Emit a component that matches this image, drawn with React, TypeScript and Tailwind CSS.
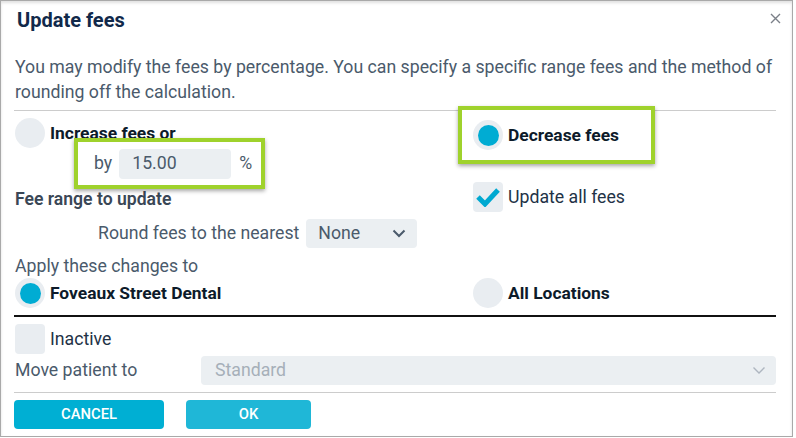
import React from "react";

function Radio({ checked }: { checked?: boolean }) {
  return (
    <span className="flex h-[30px] w-[30px] shrink-0 items-center justify-center rounded-full bg-[#e9edf1]">
      {checked && <span className="h-[21px] w-[21px] rounded-full bg-[#00acd3]" />}
    </span>
  );
}

function Checkbox({ checked }: { checked?: boolean }) {
  return (
    <span className="flex h-[30px] w-[30px] shrink-0 items-center justify-center rounded-[4px] bg-[#e9edf1]">
      {checked && (
        <svg width="24" height="20" viewBox="0 0 24 20">
          <path d="M2 10 L9 17 L22 3" fill="none" stroke="#00a9d1" strokeWidth="5" strokeLinejoin="miter" />
        </svg>
      )}
    </span>
  );
}

function Chevron({ color, width = 2 }: { color: string; width?: number }) {
  return (
    <svg width="14" height="9" viewBox="0 0 14 9">
      <path d="M1.5 1.5 L7 7 L12.5 1.5" fill="none" stroke={color} strokeWidth={width} />
    </svg>
  );
}

export default function App() {
  return (
    <div className="h-[438px] w-[796px] bg-white font-['Roboto',sans-serif]">
      <div className="flex h-[437px] w-[793px] flex-col border border-[#a9a9a9] bg-white px-[13px] shadow-[inset_0_2px_3px_rgba(0,0,0,0.12)]">
        <div className="flex items-start justify-between pt-[6px]">
          <h1 className="pl-[3px] text-[20px] font-bold leading-[26px] text-[#11294a]">Update fees</h1>
          <svg className="-mr-[2px] mt-[6px]" width="11" height="11" viewBox="0 0 11 11">
            <path d="M1 1 L10 10 M10 1 L1 10" stroke="#7b8088" strokeWidth="1.4" />
          </svg>
        </div>

        <p className="mt-[22px] pl-[1px] text-[17.7px] leading-[25px] text-[#4a5a6b]">
          You may modify the fees by percentage. You can specify a specific range fees and the method of rounding off the calculation.
        </p>

        <div className="mt-[5px] h-px w-[762px] bg-[#cccccc]" />

        <div className="flex">
          <div className="w-[444px]">
            <div className="mt-[7px] flex items-center gap-[5px] pl-[1px]">
              <Radio />
              <span className="text-[17.4px] font-bold text-[#0d1b2a]">Increase fees or</span>
            </div>
            <div className="relative -mt-[10px] ml-[60px] flex h-[51px] w-[191px] items-center border-[4px] border-[#9fd22c] bg-white pl-[16px] shadow-[0_2px_4px_rgba(0,0,0,0.35)]">
              <span className="text-[17.7px] text-[#4a5a6b]">by</span>
              <span className="ml-[7px] flex h-[30px] w-[112px] items-center rounded-[4px] bg-[#ebeff2] pl-[13px] text-[17.7px] text-[#4a5a6b]">15.00</span>
              <span className="ml-[8px] text-[17.7px] text-[#4a5a6b]">%</span>
            </div>
            <div className="mt-[1px] pl-[1px] text-[17.6px] font-semibold leading-[18px] text-[#3a4756]">Fee range to update</div>
            <div className="mt-[11px] flex items-center pl-[84px]">
              <span className="text-[17.7px] text-[#4a5a6b]">Round fees to the nearest</span>
              <span className="ml-[7px] flex h-[29px] w-[111px] items-center justify-between rounded-[4px] bg-[#ebeff2] pl-[12px] pr-[11px] text-[17.7px] text-[#4a5a6b]">
                None
                <Chevron color="#4a5a6b" />
              </span>
            </div>
          </div>
          <div className="flex-1">
            <div className="relative -mt-[5px] flex h-[58px] w-[197px] items-center gap-[5px] border-[4px] border-[#9fd22c] bg-white pl-[11px] shadow-[0_2px_4px_rgba(0,0,0,0.35)]">
              <Radio checked />
              <span className="text-[17.4px] font-bold text-[#0d1b2a]">Decrease fees</span>
            </div>
            <div className="mt-[18px] flex items-center gap-[5px] pl-[15px]">
              <Checkbox checked />
              <span className="text-[17.7px] text-[#223246]">Update all fees</span>
            </div>
          </div>
        </div>

        <div className="mt-[8px] pl-[1px] text-[17.7px] leading-[21px] text-[#4a5a6b]">Apply these changes to</div>

        <div className="mt-[1px] flex">
          <div className="flex w-[444px] items-center gap-[5px] pl-[1px]">
            <Radio checked />
            <span className="text-[17.4px] font-bold text-[#0d1b2a]">Foveaux Street Dental</span>
          </div>
          <div className="flex items-center gap-[5px] pl-[15px]">
            <Radio />
            <span className="text-[17.4px] font-bold text-[#0d1b2a]">All Locations</span>
          </div>
        </div>

        <div className="mt-[7px] h-[2px] w-[762px] bg-[#111111]" />

        <div className="mt-[7px] flex items-center gap-[5px] pl-[1px]">
          <Checkbox />
          <span className="text-[17.7px] text-[#223246]">Inactive</span>
        </div>

        <div className="mt-[2px] flex items-center">
          <span className="w-[187px] pl-[1px] text-[17.7px] text-[#4a5a6b]">Move patient to</span>
          <span className="flex h-[29px] w-[575px] items-center justify-between rounded-[4px] bg-[#ebeff2] pl-[14px] pr-[10px] text-[17.7px] text-[#a6afb9]">
            Standard
            <Chevron color="#aeb6c0" width={1.4} />
          </span>
        </div>

        <div className="mt-[7px] h-px w-[762px] bg-[#cccccc]" />

        <div className="mt-[7px] flex gap-[22px]">
          <button className="flex h-[29px] w-[150px] items-center justify-center rounded-[4px] bg-[#00afd3] text-[14.8px] font-medium text-white">
            CANCEL
          </button>
          <button className="flex h-[29px] w-[125px] items-center justify-center rounded-[4px] bg-[#1fb7d7] text-[14.8px] font-medium text-white">
            OK
          </button>
        </div>
      </div>
    </div>
  );
}
